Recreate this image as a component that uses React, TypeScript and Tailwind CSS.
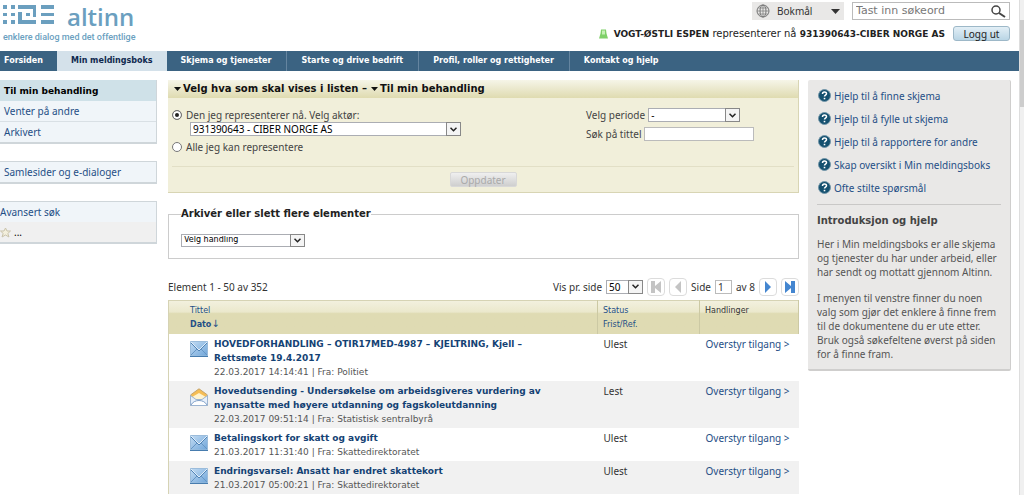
import React, { useState } from "react";

const NAV_ITEMS = [
  "Forsiden",
  "Min meldingsboks",
  "Skjema og tjenester",
  "Starte og drive bedrift",
  "Profil, roller og rettigheter",
  "Kontakt og hjelp",
];

const HELP_LINKS = [
  "Hjelp til å finne skjema",
  "Hjelp til å fylle ut skjema",
  "Hjelp til å rapportere for andre",
  "Skap oversikt i Min meldingsboks",
  "Ofte stilte spørsmål",
];

const MESSAGES = [
  {
    title: "HOVEDFORHANDLING – OTIR17MED-4987 – KJELTRING, Kjell – Rettsmøte 19.4.2017",
    meta: "22.03.2017 14:14:41 | Fra: Politiet",
    read: false,
  },
  {
    title:
      "Hovedutsending - Undersøkelse om arbeidsgiveres vurdering av nyansatte med høyere utdanning og fagskoleutdanning",
    meta: "22.03.2017 09:51:14 | Fra: Statistisk sentralbyrå",
    read: true,
  },
  {
    title: "Betalingskort for skatt og avgift",
    meta: "21.03.2017 11:31:40 | Fra: Skattedirektoratet",
    read: false,
  },
  {
    title: "Endringsvarsel: Ansatt har endret skattekort",
    meta: "21.03.2017 05:00:21 | Fra: Skattedirektoratet",
    read: false,
  },
];

const Logo = () => (
  <svg width="52" height="20" viewBox="0 0 52 20" fill="#6b9fbf" className="mt-[5px]" aria-hidden="true">
    <path d="M0 0h4v4H0zM8 0h4v4H8zM0 8h4v3H0zM8 8h4v3H8zM0 15h4v4H0zM8 15h4v4H8z" />
    <path d="M15 0h18v12h-3V4H15zM15 7h4v8h14v4H15zM23 8h4v3h-4z" />
    <path d="M38 0h13v4H38zM38 8h13v3H38zM38 15h13v4H38z" />
  </svg>
);

const Globe = () => (
  <svg width="14" height="14" viewBox="0 0 14 14" fill="none" stroke="#777" aria-hidden="true">
    <circle cx="7" cy="7" r="6" />
    <ellipse cx="7" cy="7" rx="3" ry="6" />
    <path d="M7 1v12M1 7h12M2 4h10M2 10h10" strokeWidth=".7" />
  </svg>
);

const Triangle = () => (
  <svg width="7" height="4" viewBox="0 0 7 4" fill="#111" aria-hidden="true">
    <path d="M0 0h7L3.500 4z" />
  </svg>
);

const Envelope = ({ read }: { read: boolean }) =>
  read ? (
    <svg width="18" height="18" viewBox="0 0 18 18" aria-hidden="true">
      <path d="M.5 7 9 .8 17.500 7v10.500H.5z" fill="#f5bd55" stroke="#c4a36c" />
      <path d="M3 8.500 9 5l6 3.500V12H3z" fill="#fff3cf" />
      <path d="M.5 7.500 6 11.500h6l5.500-4v10H.5z" fill="#e6effa" stroke="#9db5d2" />
      <path d="M1 17c3-6 13-6 16 0" fill="#fff" stroke="#7f9fc8" />
    </svg>
  ) : (
    <svg width="18" height="16" viewBox="0 0 18 16" aria-hidden="true">
      <defs>
        <linearGradient id="envelope" x2="1" y2="1">
          <stop stopColor="#c3dcf3" />
          <stop offset="1" stopColor="#6fa5d9" />
        </linearGradient>
      </defs>
      <path d="M.5.5h17v14.500H.5z" fill="url(#envelope)" stroke="#9bbcdb" />
      <path d="M1 14 7 8M17 14 11 8" fill="none" stroke="#6796c4" />
      <path d="M1 2 9 10 17 2" fill="none" stroke="#4f83b6" />
      <path d="M1 1 9 9 17 1" fill="none" stroke="#e3effa" />
      <path d="M0 15.500h18" stroke="#477cae" />
    </svg>
  );

const HelpIcon = () => (
  <svg width="13" height="13" viewBox="0 0 13 13" aria-hidden="true">
    <circle cx="6.500" cy="6.500" r="6" fill="#14506f" stroke="#7295a8" />
    <path d="M4.500 5c0-2.600 4-2.600 4-.2 0 1.400-2 1.400-2 2.700" fill="none" stroke="#fff" strokeWidth="1.500" />
    <path d="M5.700 8.800h1.600v1.500H5.700z" fill="#fff" />
  </svg>
);

type SelectProps = { id: string; label?: string; options: string[]; className: string };

const Select = ({ id, label, options, className }: SelectProps) => (
  <span className={`relative inline-flex shrink-0 ${className}`}>
    <select
      id={id}
      aria-label={label}
      className="h-full w-full appearance-none border border-[#abadb3] bg-white pl-[2px] pr-4 leading-none text-black"
    >
      {options.map((option) => (
        <option key={option}>{option}</option>
      ))}
    </select>
    <span className="pointer-events-none absolute inset-y-0 right-0 flex w-[15px] items-center justify-center border border-[#888] bg-[#f4f4f4]">
      <svg width="7" height="5" viewBox="0 0 7 5" fill="none" stroke="#222" strokeWidth="1.500" aria-hidden="true">
        <path d="M.5.8 3.500 3.800 6.500.8" />
      </svg>
    </span>
  </span>
);

const PagerButton = ({ label, last, back }: { label: string; last?: boolean; back?: boolean }) => (
  <button
    aria-label={label}
    disabled={back}
    className="flex h-[18px] w-[18px] shrink-0 items-center justify-center rounded border border-[#dcdcdc] bg-white text-[#4486d0] disabled:text-[#c4c4c4]"
  >
    <svg
      width="10"
      height="12"
      viewBox="0 0 10 12"
      fill="currentColor"
      className={back ? "rotate-180" : ""}
      aria-hidden="true"
    >
      {last ? <path d="M0 0 6 5V0h4v12H6V7L0 12z" /> : <path d="M2 0 8 6 2 12z" />}
    </svg>
  </button>
);

const Header = () => (
  <header className="flex h-[51px] justify-between pl-[3px] pr-[9px]">
    <a href="#" className="block text-[#6b9fbf]">
      <span className="flex items-start gap-3">
        <Logo />
        <span className="font-['Open_Sans',sans-serif] text-2xl leading-[33px] font-semibold">altinn</span>
      </span>
      <span className="block font-[Roboto,sans-serif] text-[9px] leading-2 font-medium">
        enklere dialog med det offentlige
      </span>
    </a>
    <div className="flex flex-col items-end gap-[6px] pt-[2px]">
      <div className="flex gap-2">
        <button className="flex h-[18px] w-[92px] items-center bg-[#e9e8e7] px-1 text-[#333]">
          <Globe />
          <span className="ml-[7px] flex-1 text-left">Bokmål</span>
          <svg width="9" height="5" fill="currentColor" aria-hidden="true">
            <path d="M0 0h9L4.500 5z" />
          </svg>
        </button>
        <form className="flex h-[18px] w-[158px] items-center border border-[#bbb] bg-white">
          <input
            type="text"
            aria-label="Søk"
            placeholder="Tast inn søkeord"
            className="min-w-0 flex-1 pl-[3px] font-['DejaVu_Sans',sans-serif] text-[11px] outline-none placeholder:text-[#777]"
          />
          <button aria-label="Søk" type="button" className="pr-[3px]">
            <svg width="16" height="13" viewBox="0 0 16 13" fill="none" stroke="#444" aria-hidden="true">
              <circle cx="6" cy="5" r="4" strokeWidth="1.500" />
              <path d="M9 8l6 4" strokeWidth="2" />
            </svg>
          </button>
        </form>
      </div>
      <div className="flex items-center text-[#222]">
        <svg width="9" height="10" viewBox="0 0 9 10" className="mr-[6px]" aria-hidden="true">
          <path d="M2 .5h5l.5 4L9 9.500H0l1.500-5z" fill="#7fd069" />
          <path d="M3 1.500h3v4H3z" fill="#c5f0b5" />
        </svg>
        <span className="font-['DejaVu_Sans',sans-serif]">
          <b className="text-[9px]">VOGT-ØSTLI ESPEN</b> representerer nå{" "}
          <b className="text-[9px]">931390643-CIBER NORGE AS</b>
        </span>
        <button className="ml-2 h-[15px] w-[57px] rounded-[3px] border border-[#9db8c8] bg-linear-to-b from-[#e3eff6] to-[#b9d5e5] leading-3">
          Logg ut
        </button>
      </div>
    </div>
  </header>
);

const Nav = () => (
  <nav className="flex h-5 bg-[#3b6382] font-['DejaVu_Sans',sans-serif] text-[8px] text-white">
    {NAV_ITEMS.map((item, idx) => (
      <a
        key={item}
        href="#"
        className={
          idx === 1
            ? "flex items-center bg-[#d4e1ea] px-[14px] font-bold text-[#10294f]"
            : "flex items-center border-r border-[#6585a0] pr-[15px] pl-[14px] font-bold first:border-0 first:pr-[14px] first:pl-1 last:border-0"
        }
      >
        {item}
      </a>
    ))}
  </nav>
);

const Sidebar = () => (
  <aside className="flex w-[157px] shrink-0 flex-col gap-[17px] text-[#1f4f86]">
    <ul className="border-r border-b-2 border-[#cfd6da] bg-[#f0f5f9]">
      <li className="flex h-[21px] items-center bg-[#cfe1e8] pl-1 font-['DejaVu_Sans',sans-serif] text-[9px] font-bold text-black">
        Til min behandling
      </li>
      <li className="flex h-[21px] items-center border-b border-[#d9e0e5] pl-1">
        <a href="#">Venter på andre</a>
      </li>
      <li className="flex h-5 items-center pl-1">
        <a href="#">Arkivert</a>
      </li>
    </ul>
    <ul className="border-t border-r border-b-2 border-[#cfd6da] bg-[#f0f5f9]">
      <li className="flex h-5 items-center pl-1">
        <a href="#">Samlesider og e-dialoger</a>
      </li>
    </ul>
    <ul className="border-t border-r border-b-2 border-[#cfd6da] bg-[#f0f5f9]">
      <li className="flex h-5 items-center">
        <a href="#">Avansert søk</a>
      </li>
      <li className="flex h-5 items-center gap-[3px] bg-[#f0f0f0] text-black">
        <svg width="11" height="11" viewBox="0 0 11 11" fill="#f3efdc" stroke="#c9c3ab" aria-hidden="true">
          <path d="M5.500 1 7 4h3.500L7.800 6.500 9 10 5.500 8 2 10l1.200-3.500L.5 4H4z" />
        </svg>
        ...
      </li>
    </ul>
  </aside>
);

const FilterPanel = () => {
  const [scope, setScope] = useState("one");

  return (
    <section className="border-r border-b border-[#d8d5b4] bg-[#f1efda]">
      <h2 className="flex h-[18px] items-center gap-[2px] bg-linear-to-b from-[#f6f5e8] to-[#dfdbb0] pl-[6px] font-['DejaVu_Sans',sans-serif] text-[10px] font-bold text-[#111]">
        <Triangle />
        <span className="mr-[2px]">Velg hva som skal vises i listen –</span>
        <Triangle />
        <span>Til min behandling</span>
      </h2>
      <div className="mx-1 flex justify-between border-b border-[#e2dfc6] pt-[10px] pb-3 text-[#444]">
        <div>
          <label className="flex h-[14px] items-center gap-1">
            <input
              type="radio"
              name="scope"
              checked={scope === "one"}
              onChange={() => setScope("one")}
              className="h-[10px] w-[10px] appearance-none rounded-full border border-[#777] bg-white checked:bg-[#222] checked:shadow-[inset_0_0_0_2px_white]"
            />
            Den jeg representerer nå. Velg aktør:
          </label>
          <Select
            id="actor"
            label="Velg aktør"
            options={["931390643 - CIBER NORGE AS"]}
            className="ml-[18px] h-[14px] w-[271px]"
          />
          <label className="mt-1 flex h-[14px] items-center gap-1">
            <input
              type="radio"
              name="scope"
              checked={scope === "all"}
              onChange={() => setScope("all")}
              className="h-[10px] w-[10px] appearance-none rounded-full border border-[#777] bg-white checked:bg-[#222] checked:shadow-[inset_0_0_0_2px_white]"
            />
            Alle jeg kan representere
          </label>
        </div>
        <div className="flex w-[208px] flex-col gap-[5px]">
          <div className="flex h-[14px] items-center gap-[3px]">
            <label htmlFor="period">Velg periode</label>
            <Select id="period" options={["-"]} className="h-[14px] w-[92px]" />
          </div>
          <div className="flex h-[14px] items-center gap-[3px]">
            <label htmlFor="titleSearch">Søk på tittel</label>
            <input id="titleSearch" type="text" className="h-[14px] w-[110px] border border-[#bbb] bg-white px-1" />
          </div>
        </div>
      </div>
      <div className="flex h-[25px] items-center justify-center">
        <button
          disabled
          className="h-[15px] w-[67px] rounded-[2px] border border-[#d8d8d8] bg-linear-to-b from-[#efefef] to-[#cfcfcf] leading-3 text-[#aaa]"
        >
          Oppdater
        </button>
      </div>
    </section>
  );
};

const Pager = () => (
  <div className="mt-[19px] mb-1 flex items-center text-[#333]">
    <span className="flex-1">Element 1 - 50 av 352</span>
    <div className="flex items-center gap-1">
      <label htmlFor="pageSize">Vis pr. side</label>
      <Select id="pageSize" options={["50"]} className="h-[14px] w-[37px]" />
      <PagerButton label="Første side" last back />
      <PagerButton label="Forrige side" back />
      <label htmlFor="page">Side</label>
      <input id="page" type="text" defaultValue="1" className="h-[14px] w-[17px] border border-[#bbb] px-[2px]" />
      <span>av 8</span>
      <PagerButton label="Neste side" />
      <PagerButton label="Siste side" last />
    </div>
  </div>
);

const MessageTable = () => (
  <table className="w-full table-fixed border-t border-l border-[#d6d3b4] text-left">
    <thead>
      <tr className="h-[34px] bg-linear-to-b from-[#f3f1e0] from-0% via-[#ebe8cc] via-35% to-[#dfdbb3] to-40% align-top font-['DejaVu_Sans',sans-serif] text-[8px] leading-[14px] text-[#1f4f86]">
        <th className="pt-[3px] pl-[21px] font-normal">
          Tittel
          <br />
          <b>Dato</b>
          <span className="text-[10px] leading-3">↓</span>
        </th>
        <th className="w-[102px] border-l border-[#ccc9a4] pt-[3px] pl-[5px] font-normal">
          Status
          <br />
          Frist/Ref.
        </th>
        <th className="w-[99px] border-x border-[#ccc9a4] pt-[3px] pl-[5px] font-normal text-[#333]">Handlinger</th>
      </tr>
    </thead>
    <tbody>
      {MESSAGES.map(({ title, meta, read }) => (
        <tr key={title} className="align-top leading-[14px] even:bg-[#f1f1f1]">
          <td className="pt-[3px] pr-10 pb-[2px] pl-[21px] font-['DejaVu_Sans',sans-serif] text-[9px]">
            <div className="flex gap-[6px]">
              <span className="shrink-0 pt-1">
                <Envelope read={read} />
              </span>
              <div>
                <a href="#" className="block font-bold text-[#144274]">
                  {title}
                </a>
                <div className="text-[#555]">{meta}</div>
              </div>
            </div>
          </td>
          <td className="pt-[3px] pl-[6px] text-[#333]">{read ? "Lest" : "Ulest"}</td>
          <td className="pt-[3px] pl-[6px]">
            <a href="#" className="text-[#1f4f86]">
              Overstyr tilgang &gt;
            </a>
          </td>
        </tr>
      ))}
    </tbody>
  </table>
);

const HelpPanel = () => (
  <aside className="w-[203px] shrink-0 rounded-[2px] border-r border-b-2 border-[#cfcecd] bg-[#e9e8e7] px-[9px] pt-1 pb-2 text-[#555]">
    <ul className="border-b border-[#c9c8c7] pb-[5px]">
      {HELP_LINKS.map((link) => (
        <li key={link} className="flex h-[23px] items-center gap-[3px] pl-[1px] text-[#1f4f86]">
          <HelpIcon />
          <a href="#">{link}</a>
        </li>
      ))}
    </ul>
    <h2 className="mt-[9px] mb-[9px] font-['DejaVu_Sans',sans-serif] text-[10px] leading-[14px] font-bold text-[#444]">
      Introduksjon og hjelp
    </h2>
    <p className="leading-[14px]">
      Her i Min meldingsboks er alle skjema og tjenester du har under arbeid, eller har sendt og mottatt gjennom
      Altinn.
    </p>
    <p className="mt-3 leading-[14px]">
      I menyen til venstre finner du noen valg som gjør det enklere å finne frem til de dokumentene du er ute etter.
      Bruk også søkefeltene øverst på siden for å finne fram.
    </p>
  </aside>
);

const App = () => (
  <div className="flex h-screen overflow-hidden bg-white font-['Noto_Sans',sans-serif] text-[10px] leading-[14px]">
    <div className="min-w-0 flex-1">
      <Header />
      <Nav />
      <div className="flex items-start pt-[9px] pr-2">
        <Sidebar />
        <main className="mr-[9px] ml-[11px] min-w-0 flex-1">
          <FilterPanel />
          <fieldset className="mt-[14px] border border-[#ccc] px-3 pt-[10px] pb-[11px]">
            <legend className="font-['DejaVu_Sans',sans-serif] text-[10px] leading-[14px] font-bold text-[#222]">
              Arkivér eller slett flere elementer
            </legend>
            <Select
              id="action"
              label="Velg handling"
              options={["Velg handling"]}
              className="h-[13px] w-[124px] font-['DejaVu_Sans',sans-serif] text-[8px]"
            />
          </fieldset>
          <Pager />
          <MessageTable />
        </main>
        <HelpPanel />
      </div>
    </div>
    <div className="w-[5px] shrink-0 border-l border-[#ddd] bg-[#f0f0f0] pt-5">
      <div className="h-[87px] bg-[#cdcdcd]" />
    </div>
  </div>
);

export default App;
